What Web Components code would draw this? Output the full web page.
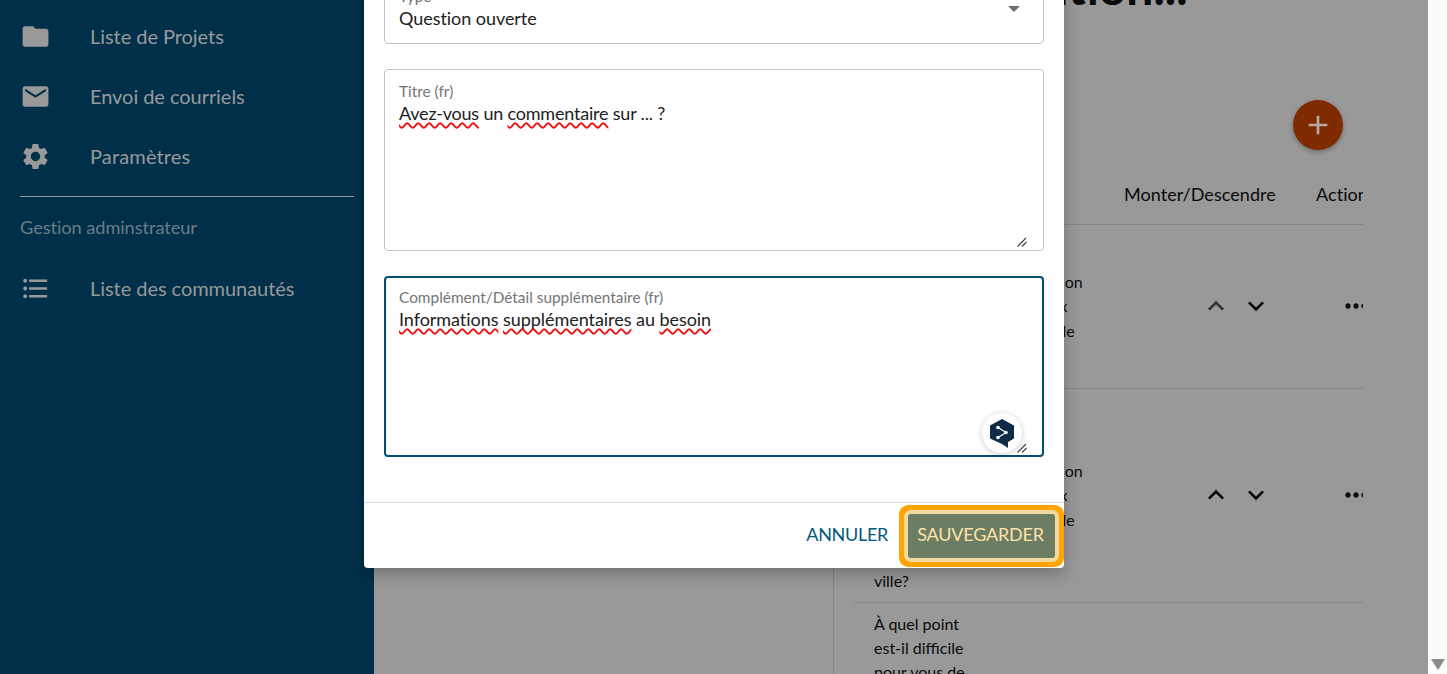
<!DOCTYPE html>
<html lang="fr">
<head>
<meta charset="utf-8">
<title>Questions</title>
<style>
  html, body { margin: 0; height: 100%; overflow: hidden; }
  body { font-family: Lato, "Liberation Sans", sans-serif; background: #999; }
</style>
</head>
<body>
<app-shell>
  <side-nav slot="nav">
    <nav-item icon="folder">Liste de Projets</nav-item>
    <nav-item icon="mail">Envoi de courriels</nav-item>
    <nav-item icon="gear" style="letter-spacing:.15px">Paramètres</nav-item>
    <nav-heading>Gestion adminstrateur</nav-heading>
    <nav-item icon="list">Liste des communautés</nav-item>
  </side-nav>

  <question-panel slot="main">
    <question-row middle="information|aux choix|un modèle">
      <span slot="title"></span>
    </question-row>
    <question-row tall up-active middle="information|aux choix|un modèle">
      <span slot="title">ville?</span>
    </question-row>
    <question-row open>
      <span slot="title">À quel point<br>est-il difficile<br>pour vous de</span>
    </question-row>
  </question-panel>
</app-shell>

<edit-dialog>
  <form-field label="Type" value="Question ouverte" select></form-field>
  <form-field label="Titre (fr)" area style="--value-spacing:-.2px"><span class="sp">Avez-vous</span> un <span class="sp">commentaire</span> sur ... ?</form-field>
  <form-field label="Complément/Détail supplémentaire (fr)" area focused deepl><span class="sp">Informations</span> <span class="sp">supplémentaires</span> au <span class="sp">besoin</span></form-field>
</edit-dialog>

<script>
const ICONS = {
  folder: 'M10 4H4c-1.1 0-1.99.9-1.99 2L2 18c0 1.1.9 2 2 2h16c1.1 0 2-.9 2-2V8c0-1.1-.9-2-2-2h-8l-2-2z',
  mail: 'M20 4H4c-1.1 0-1.99.9-1.99 2L2 18c0 1.1.9 2 2 2h16c1.1 0 2-.9 2-2V6c0-1.1-.9-2-2-2zm0 4l-8 5-8-5V6l8 5 8-5v2z',
  gear: 'M19.14 12.94c.04-.3.06-.61.06-.94 0-.32-.02-.64-.07-.94l2.03-1.58c.18-.14.23-.41.12-.61l-1.92-3.32c-.12-.22-.37-.29-.59-.22l-2.39.96c-.5-.38-1.03-.7-1.62-.94l-.36-2.54c-.04-.24-.24-.41-.48-.41h-3.84c-.24 0-.43.17-.47.41l-.36 2.54c-.59.24-1.13.57-1.62.94l-2.39-.96c-.22-.08-.47 0-.59.22L2.74 8.87c-.12.21-.08.47.12.61l2.03 1.58c-.05.3-.09.63-.09.94s.02.64.07.94l-2.03 1.58c-.18.14-.23.41-.12.61l1.92 3.32c.12.22.37.29.59.22l2.39-.96c.5.38 1.03.7 1.62.94l.36 2.54c.05.24.24.41.48.41h3.84c.24 0 .44-.17.47-.41l.36-2.54c.59-.24 1.13-.56 1.62-.94l2.39.96c.22.08.47 0 .59-.22l1.92-3.32c.12-.22.07-.47-.12-.61l-2.01-1.58zM12 15.6c-1.98 0-3.6-1.62-3.6-3.6s1.62-3.6 3.6-3.6 3.6 1.62 3.6 3.6-1.62 3.6-3.6 3.6z',
  list: 'M4 10.5c-.83 0-1.5.67-1.5 1.5s.67 1.5 1.5 1.5 1.5-.67 1.5-1.5-.67-1.5-1.5-1.5zm0-6c-.83 0-1.5.67-1.5 1.5S3.17 7.5 4 7.5 5.5 6.83 5.5 6 4.83 4.5 4 4.5zm0 12c-.83 0-1.5.68-1.5 1.5s.68 1.5 1.5 1.5 1.5-.68 1.5-1.5-.67-1.5-1.5-1.5zM7 19h14v-2H7v2zm0-6h14v-2H7v2zm0-8v2h14V5H7z',
  up: 'M12 8l-6 6 1.41 1.41L12 10.83l4.59 4.58L18 14z',
  down: 'M16.59 8.59L12 13.17 7.41 8.59 6 10l6 6 6-6z',
  more: 'M6 10c-1.1 0-2 .9-2 2s.9 2 2 2 2-.9 2-2-.9-2-2-2zm12 0c-1.1 0-2 .9-2 2s.9 2 2 2 2-.9 2-2-.9-2-2-2zm-6 0c-1.1 0-2 .9-2 2s.9 2 2 2 2-.9 2-2-.9-2-2-2z',
  plus: 'M19 13h-6v6h-2v-6H5v-2h6V5h2v6h6v2z'
};
const svg = (name, size) => `<svg width="${size}" height="${size}" viewBox="0 0 24 24" fill="currentColor"><path d="${ICONS[name]}"/></svg>`;

class AppShell extends HTMLElement {
  connectedCallback() {
    this.attachShadow({ mode: 'open' });
    this.shadowRoot.innerHTML = `
      <style>
        :host { display: grid; grid-template-columns: 374px 1fr 19px; height: 674px; overflow: hidden; }
        .scrollbar { background: #fbfbfb; display: flex; align-items: flex-end; justify-content: center; padding-bottom: 4px; }
        .arrow { width: 0; height: 0; border: 7px solid transparent; border-top: 11px solid #8c8c8c; border-bottom: 0; }
      </style>
      <slot name="nav"></slot>
      <slot name="main"></slot>
      <div class="scrollbar"><div class="arrow"></div></div>
    `;
  }
}
customElements.define('app-shell', AppShell);

class SideNav extends HTMLElement {
  connectedCallback() {
    this.attachShadow({ mode: 'open' });
    this.shadowRoot.innerHTML = `
      <style>
        :host { display: block; background: #003049; padding: 6px 20px 0; overflow: hidden; letter-spacing: -.05px; }
      </style>
      <slot></slot>
    `;
  }
}
customElements.define('side-nav', SideNav);

class NavItem extends HTMLElement {
  connectedCallback() {
    this.attachShadow({ mode: 'open' });
    this.shadowRoot.innerHTML = `
      <style>
        :host { display: flex; align-items: center; height: 60px; color: #999; font-size: 20px; }
        .icon { width: 70.5px; margin-left: -.5px; display: flex; }
      </style>
      <span class="icon">${svg(this.getAttribute('icon'), 31)}</span>
      <slot></slot>
    `;
  }
}
customElements.define('nav-item', NavItem);

class NavHeading extends HTMLElement {
  connectedCallback() {
    this.attachShadow({ mode: 'open' });
    this.shadowRoot.innerHTML = `
      <style>
        :host { display: block; border-top: 1px solid #999; margin-top: 10px; padding-top: 19px; height: 42px; color: #6b7c87; font-size: 18.2px; line-height: 22px; }
      </style>
      <slot></slot>
    `;
  }
}
customElements.define('nav-heading', NavHeading);

class QuestionPanel extends HTMLElement {
  connectedCallback() {
    this.attachShadow({ mode: 'open' });
    this.shadowRoot.innerHTML = `
      <style>
        :host { display: grid; grid-template-columns: 460px 1fr; color: #0a0a0a; overflow: hidden; }
        .left { border-right: 1px solid #858585; }
        .right { padding-left: 20px; padding-right: 65px; min-width: 0; }
        h1 { margin: -42px 0 0; font-size: 48px; line-height: 58px; font-weight: 700; padding-left: 75px; white-space: nowrap; }
        .add { display: flex; justify-content: flex-end; padding: 84px 20px 0 0; }
        .fab { width: 50px; height: 50px; border-radius: 50%; background: #802a00; color: #b5aaa2; display: flex; align-items: center; justify-content: center; box-shadow: 0 2px 5px rgba(0,0,0,.3); }
        .table { overflow: hidden; }
        .head { display: grid; grid-template-columns: 270px 192px 1fr; height: 75px; align-items: center; box-sizing: border-box; border-bottom: 1px solid #858585; font-size: 18px; letter-spacing: .05px; padding-top: 13px; white-space: nowrap; }
      </style>
      <div class="left"></div>
      <div class="right">
        <h1>Évaluation...</h1>
        <div class="add"><div class="fab">${svg('plus', 32)}</div></div>
        <div class="table">
          <div class="head"><span></span><span>Monter/Descendre</span><span>Actions</span></div>
          <slot></slot>
        </div>
      </div>
    `;
  }
}
customElements.define('question-panel', QuestionPanel);

class QuestionRow extends HTMLElement {
  connectedCallback() {
    this.attachShadow({ mode: 'open' });
    const lines = (this.getAttribute('middle') || '').split('|').join('<br>');
    const upColor = this.hasAttribute('up-active') ? '#0a0a0a' : '#333';
    const height = this.hasAttribute('tall') ? 214 : this.hasAttribute('open') ? 120 : 164;
    this.shadowRoot.innerHTML = `
      <style>
        :host { display: grid; grid-template-columns: 127px 123px 192px 1fr; box-sizing: border-box; height: ${height}px; padding-left: 20px; border-bottom: 1px solid #858585; font-size: 16px; line-height: 24.5px; white-space: nowrap; }
        .title { align-self: ${this.hasAttribute('tall') ? 'end' : 'start'}; padding: ${this.hasAttribute('open') ? '9px' : '0'} 0 ${this.hasAttribute('tall') ? '9px' : '0'}; line-height: 24px; }
        .mid, .arrows, .more { align-self: center; }
        .arrows { display: flex; gap: 8px; padding-left: 76px; height: 32px; margin-top: -2px; }
        .more { padding-left: 24px; height: 32px; margin-top: -2px; }
        svg { display: block; }
        .up { color: ${upColor}; }
      </style>
      <div class="title"><slot name="title"></slot></div>
      <div class="mid">${lines}</div>
      ${this.hasAttribute('open') ? '' : `
      <div class="arrows"><span class="up">${svg('up', 32)}</span><span>${svg('down', 32)}</span></div>
      <div class="more">${svg('more', 32)}</div>`}
    `;
  }
}
customElements.define('question-row', QuestionRow);

class EditDialog extends HTMLElement {
  connectedCallback() {
    this.attachShadow({ mode: 'open' });
    this.shadowRoot.innerHTML = `
      <style>
        :host { position: absolute; left: 364px; bottom: 106px; width: 700px; background: #fff; border-radius: 0 0 4px 4px; box-shadow: 0 6px 16px rgba(0,0,0,.25); }
        .body { display: flex; flex-direction: column; gap: 25px; padding: 0 20px 45px; }
        .foot { display: flex; justify-content: flex-end; align-items: center; gap: 20px; height: 66px; box-sizing: border-box; border-top: 1px solid #ddd; padding-right: 9px; }
        .cancel { color: #005a7d; font-size: 18px; letter-spacing: -.3px; padding-bottom: 4px; }
        .save { width: 147px; height: 44px; box-sizing: border-box; padding: 0 2px 3px 0; display: flex; align-items: center; justify-content: center; background: #6b7d62; color: #fde3a7; font-size: 18px; letter-spacing: -.2px; border-radius: 3px; box-shadow: 0 0 0 4px #f3d9a0, 0 0 0 9px #ffa500; }
      </style>
      <div class="body"><slot></slot></div>
      <div class="foot">
        <span class="cancel">ANNULER</span>
        <span class="save">SAUVEGARDER</span>
      </div>
    `;
  }
}
customElements.define('edit-dialog', EditDialog);

class FormField extends HTMLElement {
  connectedCallback() {
    this.attachShadow({ mode: 'open' });
    const focused = this.hasAttribute('focused');
    const area = this.hasAttribute('area');
    const select = this.hasAttribute('select');
    const padTop = focused ? 10 : area ? 12 : 11;
    this.shadowRoot.innerHTML = `
      <style>
        :host { display: block; position: relative; box-sizing: border-box; height: ${area ? (focused ? 181 : 182) : 69}px; padding: ${padTop}px ${focused ? 13 : 14}px 0; border: ${focused ? '2px solid #004e72' : '1px solid #c4c4c4'}; border-radius: 4px; background: #fff; }
        .label { color: #757575; font-size: 15.4px; line-height: 19px; display: block; }
        .value { color: #212121; font-size: 18px; line-height: 25px; letter-spacing: var(--value-spacing, -.05px); }
        .caret { position: absolute; right: 23px; top: 30px; width: 0; height: 0; border: 6.5px solid transparent; border-top: 6.5px solid #6e6e6e; border-bottom: 0; }
        .grip { position: absolute; right: ${focused ? 15 : 16}px; bottom: ${focused ? 2 : 3}px; }
        .deepl { position: absolute; right: 20px; bottom: 2px; width: 40px; height: 40px; border-radius: 50%; background: #fff; box-shadow: 0 1px 6px rgba(0,0,0,.2); display: flex; align-items: center; justify-content: center; }
        ::slotted(.sp) { text-decoration: underline wavy #f01010 1.6px; text-decoration-skip-ink: none; text-underline-offset: 2px; }
      </style>
      <span class="label">${this.getAttribute('label')}</span>
      <div class="value">${this.getAttribute('value') || ''}<slot></slot></div>
      ${select ? '<span class="caret"></span>' : ''}
      ${this.hasAttribute('deepl') ? `<span class="deepl"><svg width="26" height="31" viewBox="0 0 26 31"><path d="M13 1l12 6.5v13L19 24v6l-6-4-12-5.500V7.500z" fill="#0f2b46"/><path d="M9 9.500l8 5-8 5" fill="none" stroke="#fff" stroke-width="1.200"/><circle cx="9" cy="9.500" r="1.800" fill="#fff"/><circle cx="17" cy="14.500" r="1.800" fill="#fff"/><circle cx="9" cy="19.500" r="1.800" fill="#fff"/></svg></span>` : ''}
      ${area ? '<svg class="grip" width="10" height="10" viewBox="0 0 10 10" stroke="#444" stroke-width="1.200"><path d="M0.500 9.500l8.500-8.500M5 9.500l4.500-4.500"/></svg>' : ''}
    `;
  }
}
customElements.define('form-field', FormField);
</script>
</body>
</html>
